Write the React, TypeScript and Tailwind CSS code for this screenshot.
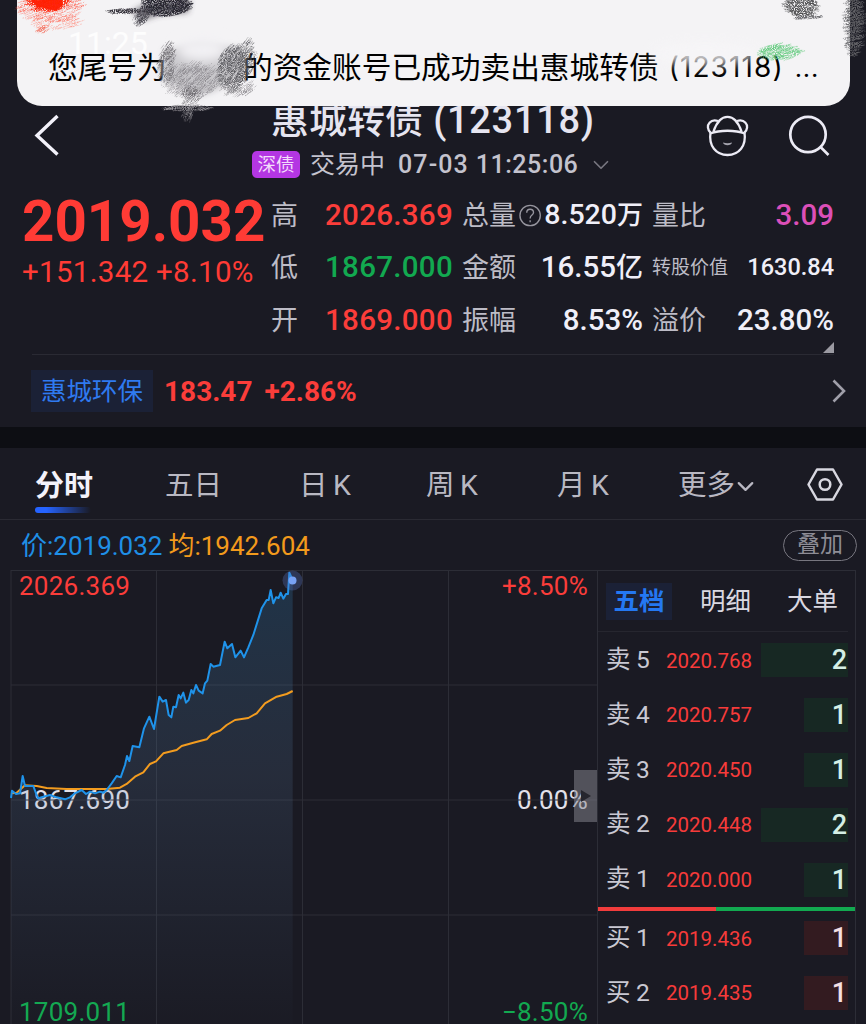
import { ChevronDown } from 'lucide-react'

interface Nivel {
  lado: string
  precio: string
  cantidad: number
}

interface Trazo {
  x: number
  y: number
  rx: number
  ry: number
  angle: number
  count: number
  color: string
  opacity: number
}

const ventas: Nivel[] = [
  { lado: '卖 5', precio: '2020.768', cantidad: 2 },
  { lado: '卖 4', precio: '2020.757', cantidad: 1 },
  { lado: '卖 3', precio: '2020.450', cantidad: 1 },
  { lado: '卖 2', precio: '2020.448', cantidad: 2 },
  { lado: '卖 1', precio: '2020.000', cantidad: 1 },
]

const compras: Nivel[] = [
  { lado: '买 1', precio: '2019.436', cantidad: 1 },
  { lado: '买 2', precio: '2019.435', cantidad: 1 },
]

const priceLine =
  '33,714 36,692 48,702 60,700 68,648 75,678 100,678 108,700 115,715 125,712 150,705 170,712 195,718 210,712 225,700 245,690 258,702 270,695 285,700 300,695 312,698 320,690 335,670 350,648 362,652 375,615 381,588 388,603 398,558 418,562 432,505 448,470 462,507 478,410 488,425 498,420 506,465 514,472 520,440 528,442 536,405 542,415 550,398 558,428 566,420 574,390 580,400 588,375 596,392 608,400 615,370 622,362 632,312 640,320 660,315 674,245 682,265 696,252 706,292 722,272 732,292 745,262 760,225 785,145 800,120 806,120 812,90 820,130 828,112 836,114 842,98 850,116 858,102 864,102 868,38 878,60'

const avgLine =
  '36,700 50,698 75,676 110,678 140,684 200,687 320,687 360,683 380,672 405,650 430,637 450,612 468,604 490,580 530,570 545,558 580,548 620,538 635,522 660,512 680,495 705,480 745,474 770,460 795,430 830,410 860,402 878,393'

const trazos: Trazo[] = [
  { x: 50, y: 8, rx: 32, ry: 14, angle: -18, count: 240, color: '#ff5a48', opacity: 0.5 },
  { x: 57, y: 22, rx: 24, ry: 7, angle: -18, count: 70, color: '#ff7a68', opacity: 0.5 },
  { x: 43, y: 30, rx: 5, ry: 3, angle: -30, count: 18, color: '#f2614f', opacity: 0.6 },
  { x: 48, y: 1, rx: 19, ry: 11, angle: -10, count: 300, color: '#ff2208', opacity: 0.8 },
  { x: 166, y: 5, rx: 24, ry: 11, angle: -12, count: 380, color: '#24222c', opacity: 0.85 },
  { x: 128, y: 11, rx: 19, ry: 2.5, angle: -8, count: 70, color: '#35333c', opacity: 0.85 },
  { x: 142, y: 18, rx: 6, ry: 6, angle: -35, count: 50, color: '#45434c', opacity: 0.7 },
  { x: 167, y: 62, rx: 8, ry: 20, angle: -55, count: 150, color: '#66656a', opacity: 0.5 },
  { x: 192, y: 80, rx: 28, ry: 17, angle: -45, count: 380, color: '#77767b', opacity: 0.42 },
  { x: 233, y: 68, rx: 15, ry: 22, angle: -52, count: 420, color: '#4b4b4f', opacity: 0.5 },
  { x: 247, y: 58, rx: 8, ry: 18, angle: -55, count: 110, color: '#55555a', opacity: 0.5 },
  { x: 238, y: 88, rx: 16, ry: 7, angle: -38, count: 90, color: '#77767b', opacity: 0.5 },
  { x: 191, y: 96, rx: 9, ry: 9, angle: -50, count: 80, color: '#66656a', opacity: 0.5 },
  { x: 188, y: 108, rx: 23, ry: 3, angle: -5, count: 110, color: '#9a999e', opacity: 0.5 },
  { x: 188, y: 113, rx: 6, ry: 6, angle: -70, count: 26, color: '#9a999e', opacity: 0.5 },
  { x: 801, y: 5, rx: 15, ry: 12, angle: 12, count: 280, color: '#4d4d50', opacity: 0.6 },
  { x: 808, y: 17, rx: 14, ry: 2, angle: -10, count: 36, color: '#5d5d60', opacity: 0.6 },
  { x: 854, y: 24, rx: 8, ry: 32, angle: -10, count: 380, color: '#66656a', opacity: 0.6 },
  { x: 780, y: 52, rx: 20, ry: 8, angle: -18, count: 230, color: '#5fcb7c', opacity: 0.45 },
]

// deterministic noise so the pencil strokes stay the same on every render
const noise = (n: number) => {
  const v = Math.sin(n * 127.1 + 11.7) * 43758.5453
  return v - Math.floor(v)
}

function Scribbles() {
  return (
    <svg className="absolute left-0 top-0 z-20" width="866" height="130" viewBox="0 0 866 130">
      <defs>
        <filter id="pencil" x="0" y="0" width="866" height="130" filterUnits="userSpaceOnUse">
          <feTurbulence type="fractalNoise" baseFrequency="0.9" numOctaves="1" seed="4" result="n" />
          <feColorMatrix in="n" type="matrix" values="0 0 0 0 0  0 0 0 0 0  0 0 0 0 0  4 0 0 0 -1.2" result="grain" />
          <feComposite in="SourceGraphic" in2="grain" operator="in" result="g" />
          <feDisplacementMap in="g" in2="n" scale="2" />
        </filter>
        <filter id="soft" x="-30%" y="-50%" width="160%" height="200%">
          <feGaussianBlur stdDeviation="6" />
        </filter>
        <filter id="smudge" x="-30%" y="-30%" width="160%" height="160%">
          <feGaussianBlur stdDeviation="3" />
        </filter>
      </defs>
      <ellipse cx="705" cy="54" rx="52" ry="12" fill="#f7f6f8" opacity="0.8" filter="url(#soft)" />
      <path d="M164 50L160 76L190 98L212 92L228 84L246 74L246 48L200 44Z" fill="#b9b8bc" opacity="0.75" filter="url(#smudge)" />
      <ellipse cx="202" cy="50" rx="26" ry="12" fill="#f2f1f4" filter="url(#soft)" />
      <path d="M31 0L37 7L44 8L56 11L63 5L62 0Z" fill="#ff2208" />
      <path d="M150 2L190 0L188 12L160 14L142 20L132 12Z" fill="#37353f" opacity="0.7" filter="url(#smudge)" />
      <g filter="url(#pencil)">
        {trazos.map((t, k) => (
          <g key={k} stroke={t.color} strokeOpacity={t.opacity} strokeWidth="0.8" strokeLinecap="round">
            {Array.from({ length: t.count }, (_, i) => {
              const a = noise(k * 999 + i) * Math.PI * 2
              const r = Math.sqrt(noise(k * 777 + i + 0.5))
              const px = t.x + Math.cos(a) * t.rx * r
              const py = t.y + Math.sin(a) * t.ry * r
              const len = 1.5 + noise(k * 55 + i) * 4
              const ang = (t.angle * Math.PI) / 180
              const dx = Math.cos(ang) * len
              const dy = Math.sin(ang) * len
              return <line key={i} x1={px - dx} y1={py - dy} x2={px + dx} y2={py + dy} />
            })}
          </g>
        ))}
      </g>
    </svg>
  )
}

function Notification() {
  return (
    <div className="absolute left-[17px] top-0 z-10 h-[106px] w-[833px] rounded-b-[25px] bg-[#f4f3f5] text-black">
      <div className="pl-[51px] pt-[25px] text-[32px] leading-[36px] text-white/80">11:25</div>
      <div className="-mt-[12px] flex whitespace-pre pl-[31px] text-[29.700px] leading-[38px]">
        <span className="w-[195px]">您尾号为</span>
        <span>的资金账号已成功卖出惠城转债</span>
        <span className="pl-[10px] text-[28px] leading-[37px] tracking-[1.1px] font-['Inter']">(123118)</span>
        <span className="pl-[11px] text-[29px] leading-[36px] tracking-[0.5px]">...</span>
      </div>
    </div>
  )
}

function BearIcon() {
  return (
    <svg className="h-[45px] w-[44px]" viewBox="0 0 44 45" fill="none" stroke="#ecebf5" strokeWidth="2.3">
      <path d="M4.500 19.500C1.500 17 1 12.500 3.500 9.800C5.500 7.500 9 7 12 8" />
      <path d="M38.500 19.500C41.500 17 42 12.500 39.500 9.800C37.500 7.500 34 7 31 8" />
      <path d="M7.500 18.500C10.500 9.500 15 3.800 21.500 3.800S32.500 9.500 35.500 18.500" />
      <path d="M4 20.500C14 16.800 29 16.800 39 20.500" />
      <path d="M4.500 19.500C2.500 33 10 42 21.500 42S40.500 33 38.500 19.500" />
      <path d="M17 29.500C20 30.500 23 30.500 26 29.500C25.500 33.200 17.500 33.200 17 29.500Z" fill="#a4a3ae" stroke="none" />
    </svg>
  )
}

function Header() {
  return (
    <header className="flex h-[189px] items-start pl-[33px] pr-[36px] pt-[100px]">
      <svg className="mt-[14px] h-[42px] w-[28px]" viewBox="0 0 28 42" fill="none" stroke="#f3f2fa" strokeWidth="3.4">
        <path d="M24.500 2L4 21.500L24.500 40.500" />
      </svg>
      <div className="ml-[183px] w-[400px]">
        <h1 className="whitespace-pre pl-[27px] text-[38px] font-medium leading-[41px] text-[#e6e5f0]">
          惠城转债<span className="tracking-[0.7px]"> (123118)</span>
        </h1>
        <div className="mt-[9px] flex h-[30px] items-center whitespace-pre pl-[8px] text-[25px] leading-[30px] text-[#c4c3ce]">
          <span className="mt-[-1px] flex h-[27px] w-[48px] items-center justify-center rounded-[5px] bg-[#b436e3] text-[18.500px] text-[#f3dcfb]">
            深债
          </span>
          <span className="ml-[10px]">交易中</span>
          <span className="ml-[13px] tracking-[1.100px] font-medium">07-03</span>
          <span className="ml-[7px] tracking-[0.500px] font-medium">11:25:06</span>
          <ChevronDown className="ml-[10px] h-[26px] w-[26px] text-[#77767f]" strokeWidth={1.600} />
        </div>
      </div>
      <div className="ml-auto flex gap-[36px] pt-[13px]">
        <BearIcon />
        <svg className="h-[44px] w-[44px]" viewBox="0 0 44 44" fill="none" stroke="#ecebf5" strokeWidth="2.700">
          <circle cx="22" cy="21.500" r="17.700" />
          <path d="M34.500 34L42.500 42" />
        </svg>
      </div>
    </header>
  )
}

function Quote() {
  const label = 'whitespace-nowrap text-[27px] text-[#bdbcc6] relative top-px'
  const value = 'text-right whitespace-nowrap text-[29.500px] font-medium text-[#f0eff8]'
  return (
    <section className="flex h-[165px] items-start">
      <div className="w-[271px] pl-[22px] text-[#ff3b35]">
        <div className="mt-[3px] text-[56.500px] font-bold leading-[60px]">2019.032</div>
        <div className="mt-[4px] whitespace-pre text-[29.500px] leading-[32px] tracking-[0.300px]">+151.342 +8.10%</div>
      </div>
      <div className="relative grid h-[157px] w-[563px] grid-cols-[27px_155px_66px_124px_84px_107px] grid-rows-3 items-center leading-[36px]">
        <span className={label}>高</span>
        <span className={`${value} tracking-[0.3px] !text-[#fb3d3a]`}>2026.369</span>
        <span className={`${label} pl-[9px]`}>总量</span>
        <span className={`${value} flex items-center justify-end !text-[28.500px]`}>
          <svg className="mr-[3px] h-[23px] w-[23px]" viewBox="0 0 23 23" fill="none" stroke="#96959e" strokeWidth="1.400">
            <circle cx="11.500" cy="11.500" r="10.500" />
            <path d="M8 8.700C8 3.800 15 4 15 8.500C15 11.200 11.500 11 11.500 14.500M11.500 16.500V18.500" />
          </svg>
          8.520<span className="text-[26px]">万</span>
        </span>
        <span className={`${label} pl-[9px]`}>量比</span>
        <span className={`${value} !text-[#dc4fb8]`}>3.09</span>

        <span className={label}>低</span>
        <span className={`${value} tracking-[0.3px] !text-[#12a950]`}>1867.000</span>
        <span className={`${label} pl-[9px]`}>金额</span>
        <span className={value}>16.55<span className="text-[27px]">亿</span></span>
        <span className={`${label} pl-[9px] !text-[19px]`}>转股价值</span>
        <span className={`${value} !text-[23.500px]`}>1630.84</span>

        <span className={label}>开</span>
        <span className={`${value} tracking-[0.3px] !text-[#fb3d3a]`}>1869.000</span>
        <span className={`${label} pl-[9px]`}>振幅</span>
        <span className={value}>8.53%</span>
        <span className={`${label} pl-[9px]`}>溢价</span>
        <span className={value}>23.80%</span>
        <svg className="absolute -bottom-[7px] right-0 h-[11px] w-[11px]" viewBox="0 0 11 11">
          <path d="M11 0V11H0Z" fill="#9b9aa2" />
        </svg>
      </div>
    </section>
  )
}

function Underlying() {
  return (
    <section className="ml-[31px] mr-[20px] flex h-[73px] items-center">
      <div className="flex h-[42px] w-[122px] items-center justify-center bg-[#1b2136] pt-px text-[25.500px] text-[#2f7af0]">惠城环保</div>
      <div className="ml-[11px] mt-[2px] text-[28px] font-bold text-[#fb3d3a]">183.47</div>
      <div className="ml-[12px] mt-[2px] text-[28px] font-bold text-[#fb3d3a]">+2.86%</div>
      <svg className="ml-auto h-[24px] w-[14px]" viewBox="0 0 14 24" fill="none" stroke="#a09fa9" strokeWidth="2.600">
        <path d="M1.500 1.500L12 12L1.500 22.500" />
      </svg>
    </section>
  )
}

function Tabs() {
  const tab = 'whitespace-pre text-[28.500px] leading-[36px] text-[#b9b8c2] [word-spacing:-1.500px]'
  return (
    <nav className="flex h-[72px] items-start border-b border-[#2a2a33] pl-[35px] pt-[20px]">
      <div className="w-[130px]">
        <div className="text-[29px] font-bold leading-[36px] text-[#f3f2fa]">分时</div>
        <div className="mt-[3px] h-[6px] w-[56px] rounded-full bg-linear-to-r from-[#2563ff] from-20% to-transparent" />
      </div>
      <div className={`${tab} w-[134px]`}>五日</div>
      <div className={`${tab} w-[127px]`}>日 K</div>
      <div className={`${tab} w-[131px]`}>周 K</div>
      <div className={`${tab} w-[121px]`}>月 K</div>
      <div className={`${tab} flex w-[129px] items-center`}>
        更多
        <ChevronDown className="-ml-[3px] h-[27px] w-[27px]" strokeWidth={2} />
      </div>
      <svg className="-mt-px h-[36px] w-[36px]" viewBox="0 0 36 36" fill="none" stroke="#d8d7e0" strokeWidth="2.500">
        <path d="M10 2.500H26L34.500 17.500L26 32.500H10L1.500 17.500Z" strokeLinejoin="round" />
        <circle cx="18" cy="17.500" r="5.300" />
      </svg>
    </nav>
  )
}

function Chart() {
  const axis = 'absolute text-[26px] leading-[24px] tracking-[0.250px]'
  return (
    <div className="relative h-[454px] w-[587px] overflow-hidden">
      <span className={`${axis} left-[9px] top-[4px] text-[#fb3d3a]`}>2026.369</span>
      <span className={`${axis} right-[9px] top-[4px] text-[#fb3d3a]`}>+8.50%</span>
      <span className={`${axis} left-[9px] top-[218px] text-[#e2e1ea]`}>1867.690</span>
      <span className={`${axis} right-[9px] top-[218px] text-[#e2e1ea]`}>0.00%</span>
      <span className={`${axis} left-[9px] top-[430px] text-[#12a950]`}>1709.011</span>
      <span className={`${axis} right-[9px] top-[430px] text-[#12a950]`}>−8.50%</span>
      <svg className="absolute inset-0" width="587" height="454" viewBox="0 0 587 454" fill="none">
        <defs>
          <linearGradient id="area" x1="0" y1="30" x2="0" y2="1392" gradientUnits="userSpaceOnUse">
            <stop offset="0" stopColor="#2f86c0" stopOpacity="0.24" />
            <stop offset="0.45" stopColor="#6186b0" stopOpacity="0.17" />
            <stop offset="1" stopColor="#6186b0" stopOpacity="0.01" />
          </linearGradient>
        </defs>
        <path
          d="M1 0.500H587M1 115H587M1 230H587M1 345H587M1 0V454M146.500 0V454M292.500 0V454M438.500 0V454"
          stroke="#2c2d36"
        />
        <g transform="translate(-10 -10) scale(0.33333)">
          <polygon points={`${priceLine} 878,1400 33,1400`} fill="url(#area)" />
          <polyline points={avgLine} stroke="#f39c1f" strokeWidth="6" strokeLinejoin="round" />
          <polyline points={priceLine} stroke="#1f93ea" strokeWidth="6" strokeLinejoin="round" />
        </g>
        <circle cx="282.500" cy="10.500" r="10" fill="#5b76c4" fillOpacity="0.32" />
        <circle cx="282.500" cy="10.500" r="4" fill="#78a2f5" />
      </svg>
      <div className="absolute right-0 top-[200px] flex h-[52px] w-[23px] items-center justify-center bg-[#8a8994]/50">
        <svg className="h-[14px] w-[10px]" viewBox="0 0 10 14">
          <path d="M0 1L10 7L0 13Z" fill="#26262e" />
        </svg>
      </div>
    </div>
  )
}

function BookRow({ nivel, buy }: { nivel: Nivel; buy?: boolean }) {
  return (
    <div className="flex h-[54.800px] items-center pl-[8px]">
      <div className="w-[60px] whitespace-pre text-[24.500px] tracking-[-0.3px] text-[#c9c8d2]">{nivel.lado}</div>
      <div className="mt-px text-[20.500px] text-[#f73b3a]">{nivel.precio}</div>
      <div className="ml-auto mr-[7px] flex w-[87px] justify-end">
        <div
          className={`${nivel.cantidad === 2 ? 'w-[87px]' : 'w-[44px]'} ${buy ? 'bg-[#331b20] text-[#f3dfe3]' : 'bg-[#172823] text-[#d5efe5]'} h-[34px] pr-[1px] text-right text-[27px] font-medium leading-[35px]`}
        >
          {nivel.cantidad}
        </div>
      </div>
    </div>
  )
}

function OrderBook() {
  return (
    <div className="h-[454px] w-[259px] overflow-hidden border-x border-t border-[#2c2d36]">
      <div className="mr-[7px] flex h-[61px] items-center border-b border-[#26262f] pl-[8px] text-[25.500px] text-[#d9d8e1]">
        <div className="flex h-[37px] w-[66px] items-center justify-center bg-[#1b2136] pt-px font-bold text-[#2478f2]">五档</div>
        <div className="ml-[28px] pt-px">明细</div>
        <div className="ml-[36px] pt-px">大单</div>
      </div>
      <div className="pt-px">
        {ventas.map(n => (
          <BookRow key={n.lado} nivel={n} />
        ))}
      </div>
      <div className="flex h-[4px]">
        <div className="w-[118px] bg-[#f23c3c]" />
        <div className="flex-1 bg-[#12a950]" />
      </div>
      {compras.map(n => (
        <BookRow key={n.lado} nivel={n} buy />
      ))}
    </div>
  )
}

export default function App() {
  return (
    <div className="relative h-[1024px] w-[866px] overflow-hidden bg-[#1a1a23] font-['Roboto','Noto_Sans_CJK_SC',sans-serif]">
      <Notification />
      <Scribbles />
      <Header />
      <Quote />
      <div className="-mb-px ml-[32px] mr-[32px] h-px bg-[#2a2a33]" />
      <Underlying />
      <div className="h-[21px] bg-[#0d0e13]" />
      <Tabs />
      <div className="flex h-[50px] items-center justify-between whitespace-pre pl-[21px] pr-[9px] text-[26px]">
        <div className="flex gap-[6px] pt-[3px]">
          <span className="text-[#1f8fe6]">价:2019.032</span>
          <span className="text-[#f39a1c]">均:1942.604</span>
        </div>
        <div className="flex h-[31px] w-[74px] items-center justify-center rounded-full border border-[#77767f] pt-px text-[23px] text-[#8e8d96]">叠加</div>
      </div>
      <div className="flex pl-[10px]">
        <Chart />
        <OrderBook />
      </div>
    </div>
  )
}
